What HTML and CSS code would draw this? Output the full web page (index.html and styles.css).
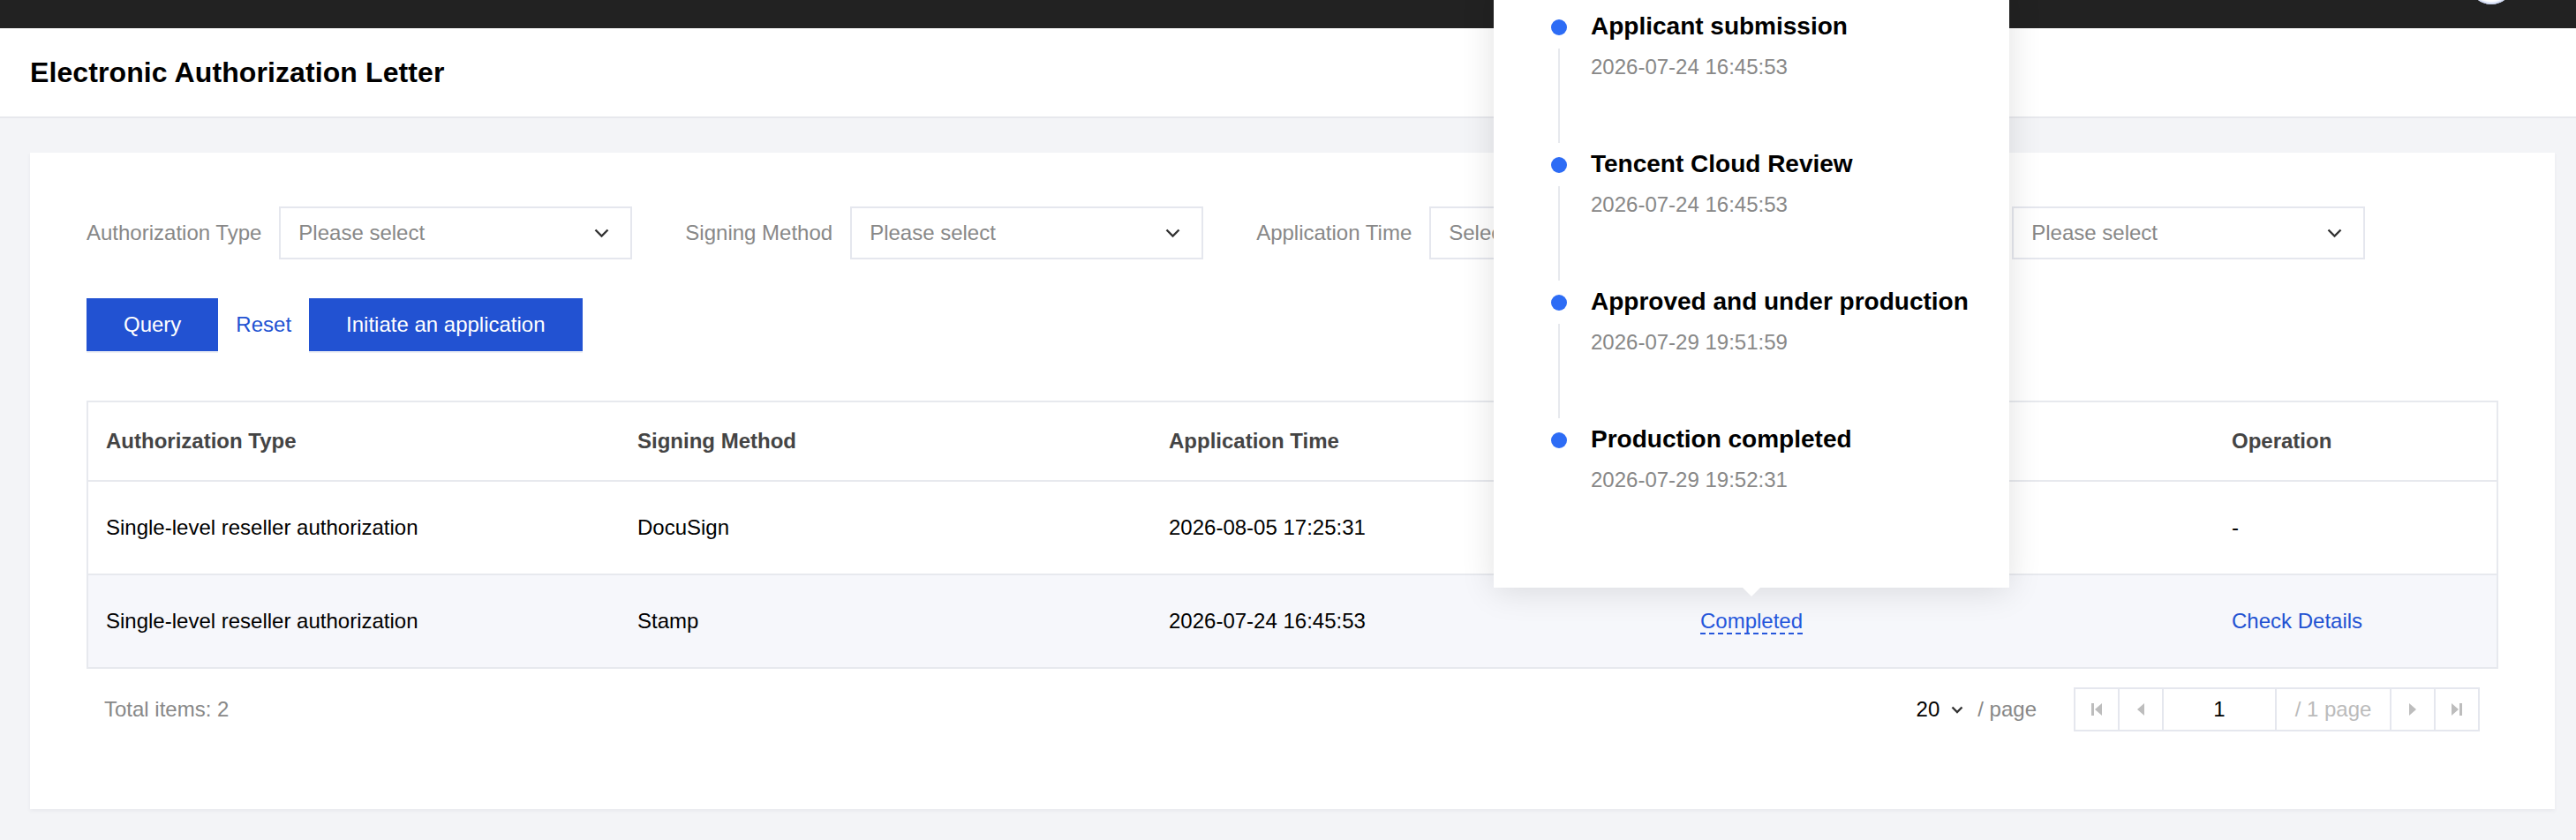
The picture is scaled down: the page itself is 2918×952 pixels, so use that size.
FILE: index.html
```html
<!DOCTYPE html>
<html lang="en">
<head>
<meta charset="utf-8">
<title>Electronic Authorization Letter</title>
<link rel="stylesheet" href="styles.css">
</head>
<body>
<div class="topbar"><span class="avatar"></span></div>
<header class="page-header"><h1>Electronic Authorization Letter</h1></header>
<main class="content">
  <section class="card">
    <div class="filters">
      <div class="field">
        <span class="field-label">Authorization Type</span>
        <div class="select"><span>Please select</span><svg class="chev" width="17" height="10" viewBox="0 0 17 10"><polyline points="1.5,1.5 8.5,8.5 15.5,1.5"/></svg></div>
      </div>
      <div class="field">
        <span class="field-label">Signing Method</span>
        <div class="select"><span>Please select</span><svg class="chev" width="17" height="10" viewBox="0 0 17 10"><polyline points="1.5,1.5 8.5,8.5 15.5,1.5"/></svg></div>
      </div>
      <div class="field">
        <span class="field-label">Application Time</span>
        <div class="select wide"><span>Select date</span></div>
      </div>
      <div class="field">
        <span class="field-label">Status</span>
        <div class="select"><span>Please select</span><svg class="chev" width="17" height="10" viewBox="0 0 17 10"><polyline points="1.5,1.5 8.5,8.5 15.5,1.5"/></svg></div>
      </div>
    </div>
    <div class="actions">
      <button class="btn">Query</button>
      <span class="text-btn">Reset</span>
      <button class="btn">Initiate an application</button>
    </div>
    <div class="table">
      <div class="row head">
        <div class="cell">Authorization Type</div>
        <div class="cell">Signing Method</div>
        <div class="cell">Application Time</div>
        <div class="cell"></div>
        <div class="cell">Operation</div>
      </div>
      <div class="row">
        <div class="cell">Single-level reseller authorization</div>
        <div class="cell">DocuSign</div>
        <div class="cell">2026-08-05 17:25:31</div>
        <div class="cell"></div>
        <div class="cell">-</div>
      </div>
      <div class="row alt">
        <div class="cell">Single-level reseller authorization</div>
        <div class="cell">Stamp</div>
        <div class="cell">2026-07-24 16:45:53</div>
        <div class="cell"><span class="status-link">Completed</span></div>
        <div class="cell"><span class="link">Check Details</span></div>
      </div>
    </div>
    <div class="footer">
      <span class="total">Total items: 2</span>
      <div class="pager">
        <span class="size">20<svg class="chev-sm" width="14" height="9" viewBox="0 0 14 9"><polyline points="1.5,1.5 7,7 12.5,1.5"/></svg></span>
        <span class="per">/ page</span>
        <div class="pager-box">
          <span class="pg"><svg width="16" height="16" viewBox="0 0 16 16"><rect x="2" y="1" width="3" height="14"/><polygon points="14,1 14,15 6,8"/></svg></span>
          <span class="pg"><svg width="12" height="16" viewBox="0 0 12 16"><polygon points="10,1 10,15 2,8"/></svg></span>
          <span class="pg-input">1</span>
          <span class="pg-total">/ 1 page</span>
          <span class="pg"><svg width="12" height="16" viewBox="0 0 12 16"><polygon points="2,1 2,15 10,8"/></svg></span>
          <span class="pg"><svg width="16" height="16" viewBox="0 0 16 16"><polygon points="2,1 2,15 10,8"/><rect x="11" y="1" width="3" height="14"/></svg></span>
        </div>
      </div>
    </div>
  </section>
</main>
<div class="popover">
  <div class="step">
    <div class="rail"><span class="dot"></span><span class="line"></span></div>
    <div class="step-body"><div class="step-title">Applicant submission</div><div class="step-time">2026-07-24 16:45:53</div></div>
  </div>
  <div class="step">
    <div class="rail"><span class="dot"></span><span class="line"></span></div>
    <div class="step-body"><div class="step-title">Tencent Cloud Review</div><div class="step-time">2026-07-24 16:45:53</div></div>
  </div>
  <div class="step">
    <div class="rail"><span class="dot"></span><span class="line"></span></div>
    <div class="step-body"><div class="step-title">Approved and under production</div><div class="step-time">2026-07-29 19:51:59</div></div>
  </div>
  <div class="step">
    <div class="rail"><span class="dot"></span></div>
    <div class="step-body"><div class="step-title">Production completed</div><div class="step-time">2026-07-29 19:52:31</div></div>
  </div>
</div>
</body>
</html>
```

FILE: styles.css
```css
html, body {
  margin: 0;
  padding: 0;
}
body {
  font-family: "Liberation Sans", Arial, Helvetica, sans-serif;
  background: #f3f4f7;
  width: 2918px;
  height: 952px;
  overflow: hidden;
  position: relative;
  color: #000;
}

.topbar {
  height: 32px;
  background: #222222;
  display: flex;
  justify-content: flex-end;
  padding-right: 71px;
  overflow: hidden;
}
.avatar {
  width: 50px;
  height: 50px;
  border-radius: 50%;
  background: #fff;
  margin-top: -45px;
  box-shadow: inset 0 -2px 2px #c9d5f2;
}

.page-header {
  height: 100px;
  background: #fff;
  border-bottom: 2px solid #e7e8ed;
  display: flex;
  align-items: center;
  padding-left: 34px;
}
.page-header h1 {
  margin: 0;
  font-size: 32px;
  font-weight: 700;
  color: #000;
  letter-spacing: 0.1px;
}

.content {
  padding: 39px 24px 0 34px;
}
.card {
  background: #fff;
  height: 744px;
  box-sizing: border-box;
  padding: 61px 64px 0;
  box-shadow: 0 2px 4px rgba(54, 58, 80, 0.06);
}

.filters {
  display: flex;
  align-items: center;
  gap: 60px;
}
.field {
  display: flex;
  align-items: center;
  gap: 20px;
}
.field-label {
  font-size: 24px;
  color: #888;
}
.select {
  width: 400px;
  height: 60px;
  box-sizing: border-box;
  border: 2px solid #e5e7ee;
  display: flex;
  align-items: center;
  justify-content: space-between;
  padding: 0 24px 0 20px;
  font-size: 24px;
  color: #888;
}
.select.wide {
  width: 512px;
}
.chev polyline, .chev-sm polyline {
  fill: none;
  stroke: #333;
  stroke-width: 2.4;
}

.actions {
  display: flex;
  align-items: center;
  gap: 20px;
  margin-top: 44px;
}
.btn {
  height: 60px;
  box-sizing: border-box;
  padding: 0 40px;
  background: #2252d2;
  border: 2px solid #2252d2;
  color: #fff;
  font-size: 24px;
  font-family: inherit;
  box-shadow: 0 2px 0 #eef0f5;
}
.text-btn {
  font-size: 24px;
  color: #2252d2;
}

.table {
  margin-top: 56px;
  border: 2px solid #e7e9ee;
}
.row {
  display: grid;
  grid-template-columns: 602px 602px 602px 602px 1fr;
  height: 104px;
  align-items: center;
  border-top: 2px solid #e7e9ee;
}
.row.head {
  height: 88px;
  border-top: none;
  font-weight: 700;
  color: #444;
}
.row.alt {
  background: #f6f7fb;
}
.cell {
  padding: 0 20px;
  font-size: 24px;
}
.link {
  color: #2252d2;
}
.status-link {
  color: #2657dc;
  border-bottom: 2px dashed #2657dc;
}

.footer {
  margin-top: 21px;
  height: 50px;
  display: flex;
  justify-content: space-between;
  align-items: center;
  padding: 0 21px 0 20px;
  font-size: 24px;
}
.total {
  color: #888;
}
.pager {
  display: flex;
  align-items: center;
}
.size {
  display: flex;
  align-items: center;
  gap: 13px;
  color: #000;
}
.per {
  color: #888;
  margin-left: 16px;
  margin-right: 42px;
}
.pager-box {
  display: flex;
  height: 50px;
  box-sizing: border-box;
  border: 2px solid #e5e7ee;
}
.pg {
  width: 48px;
  display: flex;
  align-items: center;
  justify-content: center;
  border-left: 2px solid #e5e7ee;
}
.pg:first-child {
  border-left: none;
}
.pg svg {
  fill: #bdbdbd;
}
.pg-input {
  width: 126px;
  display: flex;
  align-items: center;
  justify-content: center;
  border-left: 2px solid #e5e7ee;
  color: #000;
}
.pg-total {
  width: 128px;
  display: flex;
  align-items: center;
  justify-content: center;
  border-left: 2px solid #e5e7ee;
  color: #bbb;
}

.popover {
  position: absolute;
  left: 1692px;
  top: -22px;
  width: 584px;
  box-sizing: border-box;
  padding: 32px 0;
  background: #fff;
  box-shadow: 0 4px 36px rgba(0, 0, 0, 0.12);
  z-index: 10;
}
.popover::after {
  content: "";
  position: absolute;
  left: 50%;
  bottom: -10px;
  margin-left: -10px;
  border-left: 10px solid transparent;
  border-right: 10px solid transparent;
  border-top: 10px solid #fff;
}
.step {
  display: flex;
  height: 156px;
}
.rail {
  width: 110px;
  box-sizing: border-box;
  padding-left: 65px;
  display: flex;
  flex-direction: column;
}
.dot {
  width: 18px;
  height: 18px;
  border-radius: 50%;
  background: #2d6cf5;
  margin-top: 12px;
}
.line {
  width: 2px;
  height: 107px;
  background: #e7e9ee;
  margin-left: 8px;
  margin-top: 15px;
}
.step-title {
  font-size: 28px;
  font-weight: 700;
  line-height: 40px;
  color: #000;
}
.step-time {
  font-size: 24px;
  line-height: 34px;
  color: #888;
  margin-top: 9px;
}
```
